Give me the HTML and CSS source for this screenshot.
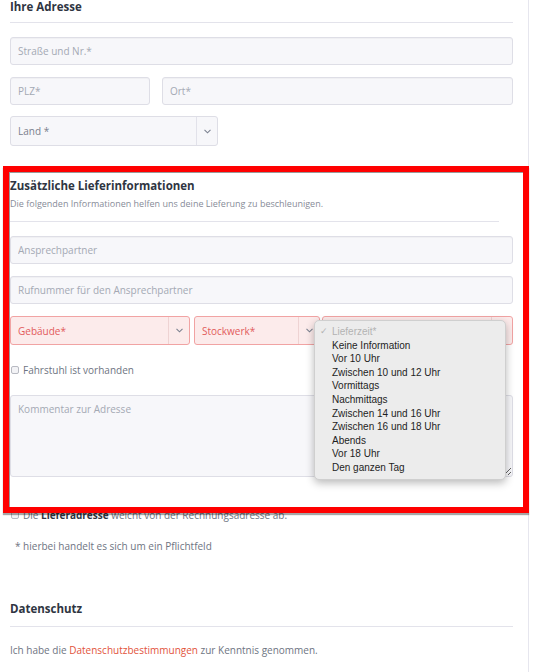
FILE: index.html
```html
<!DOCTYPE html>
<html lang="de">
<head>
<meta charset="utf-8">
<title>Adresse</title>
<link rel="stylesheet" href="styles.css">
</head>
<body>
<div class="page">
  <section class="address">
    <h2 class="title">Ihre Adresse</h2>
    <hr class="rule">
    <input class="field field-first" type="text" placeholder="Straße und Nr.*">
    <div class="row">
      <input class="field plz" type="text" placeholder="PLZ*">
      <input class="field ort" type="text" placeholder="Ort*">
    </div>
    <div class="select land">
      <span class="select-label">Land *</span>
      <span class="select-arrow"><svg width="7" height="5" viewBox="0 0 7 5"><polyline points="0.5,0.8 3.5,3.8 6.5,0.8" fill="none" stroke="#7c8291" stroke-width="1.1"/></svg></span>
    </div>
  </section>

  <section class="delivery">
    <h2 class="title delivery-title">Zusätzliche Lieferinformationen</h2>
    <p class="subtitle">Die folgenden Informationen helfen uns deine Lieferung zu beschleunigen.</p>
    <hr class="rule rule-short">
    <input class="field field-first" type="text" placeholder="Ansprechpartner">
    <input class="field field-next" type="text" placeholder="Rufnummer für den Ansprechpartner">
    <div class="select-row">
      <div class="select select-error gebaeude">
        <span class="select-label">Gebäude*</span>
        <span class="select-arrow"><svg width="7" height="5" viewBox="0 0 7 5"><polyline points="0.5,0.8 3.5,3.8 6.5,0.8" fill="none" stroke="#7c8291" stroke-width="1.1"/></svg></span>
      </div>
      <div class="select select-error stockwerk">
        <span class="select-label">Stockwerk*</span>
        <span class="select-arrow"><svg width="7" height="5" viewBox="0 0 7 5"><polyline points="0.5,0.8 3.5,3.8 6.5,0.8" fill="none" stroke="#7c8291" stroke-width="1.1"/></svg></span>
      </div>
      <div class="select select-error lieferzeit">
        <span class="select-label"></span>
        <span class="select-arrow"><svg width="7" height="5" viewBox="0 0 7 5"><polyline points="0.5,0.8 3.5,3.8 6.5,0.8" fill="none" stroke="#7c8291" stroke-width="1.1"/></svg></span>
        <ul class="menu">
          <li class="menu-head"><span class="tick">✓</span>Lieferzeit*</li>
          <li>Keine Information</li>
          <li>Vor 10 Uhr</li>
          <li>Zwischen 10 und 12 Uhr</li>
          <li>Vormittags</li>
          <li>Nachmittags</li>
          <li>Zwischen 14 und 16 Uhr</li>
          <li>Zwischen 16 und 18 Uhr</li>
          <li>Abends</li>
          <li>Vor 18 Uhr</li>
          <li>Den ganzen Tag</li>
        </ul>
      </div>
    </div>
    <label class="check check-lift"><span class="box"></span>Fahrstuhl ist vorhanden</label>
    <textarea class="comment" placeholder="Kommentar zur Adresse"></textarea>
  </section>

  <label class="check check-address"><span class="box"></span>Die&nbsp;<strong>Lieferadresse</strong>&nbsp;weicht von der Rechnungsadresse ab.</label>
  <p class="note">* hierbei handelt es sich um ein Pflichtfeld</p>

  <h2 class="title privacy-title">Datenschutz</h2>
  <hr class="rule">
  <p class="privacy-text">Ich habe die <a class="link" href="#">Datenschutzbestimmungen</a> zur Kenntnis genommen.</p>

  <div class="annotation"></div>
</div>
</body>
</html>
```

FILE: styles.css
```css
* { box-sizing: border-box; }

html, body {
  margin: 0;
  padding: 0;
  background: #ffffff;
}

body {
  font-family: "Open Sans", "Noto Sans", sans-serif;
  color: #6e7482;
}

.page {
  position: relative;
  width: 529px;
  min-height: 672px;
  padding: 0 15px 0 10px;
  border-right: 1px solid #e6e6ee;
}

.title {
  margin: 0;
  font-size: 11.5px;
  line-height: 14px;
  font-weight: 700;
  color: #2f3542;
}

.rule {
  margin: 8px 0 0;
  height: 0;
  border: 0;
  border-top: 1px solid #e3e3eb;
}

.field {
  display: block;
  width: 100%;
  height: 28px;
  padding: 0 7px;
  border: 1px solid #dedee6;
  border-radius: 3px;
  background: #f7f7fa;
  box-shadow: inset 0 1px 1px rgba(0, 0, 0, 0.03);
  font-family: "Open Sans", "Noto Sans", sans-serif;
  font-size: 10px;
  color: #555b68;
  outline: none;
}

.field::placeholder {
  color: #a4a9b4;
}

.field-first { margin-top: 14px; }
.field-next { margin-top: 12px; }

.row {
  display: flex;
  gap: 12px;
  margin-top: 12px;
}

.plz { width: 140px; }
.ort { flex: 1; }

.select {
  display: flex;
  align-items: stretch;
  border: 1px solid #dedee6;
  border-radius: 3px;
  background: #f7f7fa;
  font-size: 10px;
  color: #7a808d;
}

.select-label {
  flex: 1;
  display: flex;
  align-items: center;
  padding-left: 7px;
}

.select-arrow {
  width: 21px;
  display: flex;
  align-items: center;
  justify-content: center;
  border-left: 1px solid #e2e2ea;
}

.land {
  width: 208px;
  height: 30px;
  margin-top: 11px;
}

.delivery-title { margin-top: 33px; }

.subtitle {
  margin: 5px 0 0;
  font-size: 9px;
  line-height: 12px;
  color: #878c98;
}

.rule-short {
  margin-top: 11px;
  width: 489px;
}

.select-row {
  display: flex;
  margin-top: 12px;
  height: 29px;
}

.select-error {
  background: #fcebeb;
  border-color: #f1a3a3;
  color: #e25b5b;
}

.select-error .select-arrow {
  border-left-color: #eed3d3;
}

.gebaeude { width: 180px; }
.stockwerk { width: 126px; margin-left: 4px; }
.lieferzeit {
  position: relative;
  width: 191px;
  margin-left: 2px;
}

.menu {
  position: absolute;
  left: -9px;
  top: 3px;
  width: 192px;
  margin: 0;
  padding: 4px 0;
  list-style: none;
  background: #ececec;
  border: 1px solid #cfcfcf;
  border-radius: 5px;
  box-shadow: 0 3px 9px rgba(0, 0, 0, 0.28);
  font-family: "Liberation Sans", Arial, sans-serif;
  font-size: 10px;
  line-height: 13.6px;
  color: #1e1e1e;
  z-index: 5;
}

.menu li {
  padding-left: 17px;
  white-space: nowrap;
}

.menu .menu-head {
  position: relative;
  color: #b3b3b3;
}

.tick {
  position: absolute;
  left: 5px;
  font-family: "DejaVu Sans", sans-serif;
  font-size: 9px;
  color: #b3b3b3;
}

.check {
  display: flex;
  align-items: center;
  font-size: 10px;
  line-height: 14px;
  color: #6e7482;
}

.box {
  width: 8px;
  height: 8px;
  margin: 0 4px 0 1px;
  border: 1px solid #b8bac2;
  border-radius: 2px;
  background: #f3f3f6;
}

.check-lift { margin-top: 18px; }

.comment {
  display: block;
  width: 100%;
  height: 82px;
  margin-top: 18px;
  padding: 6px 7px;
  border: 1px solid #dedee6;
  border-radius: 3px;
  background: #f7f7fa;
  font-family: "Open Sans", "Noto Sans", sans-serif;
  font-size: 10px;
  line-height: 14px;
  color: #555b68;
  resize: vertical;
  outline: none;
}

.comment::placeholder { color: #a4a9b4; }

.check-address { margin-top: 31px; }

.check-address strong {
  font-weight: 700;
  color: #2f3542;
}

.note {
  margin: 17px 0 0;
  padding-left: 5px;
  font-size: 10px;
  line-height: 14px;
  color: #6e7482;
}

.privacy-title { margin-top: 49px; }

.privacy-title + .rule { margin-top: 10px; }

.privacy-text {
  margin: 16px 0 0;
  font-size: 10px;
  line-height: 14px;
  color: #6e7482;
}

.link {
  color: #e2533b;
  text-decoration: none;
}

.annotation {
  position: absolute;
  left: 3px;
  top: 166px;
  width: 526px;
  height: 347px;
  border: 6px solid #ff0000;
  box-shadow: inset 1px 1px 0 #9a9a9a, 0 2px 1px rgba(0, 0, 0, 0.35);
  pointer-events: none;
  z-index: 10;
}
```
